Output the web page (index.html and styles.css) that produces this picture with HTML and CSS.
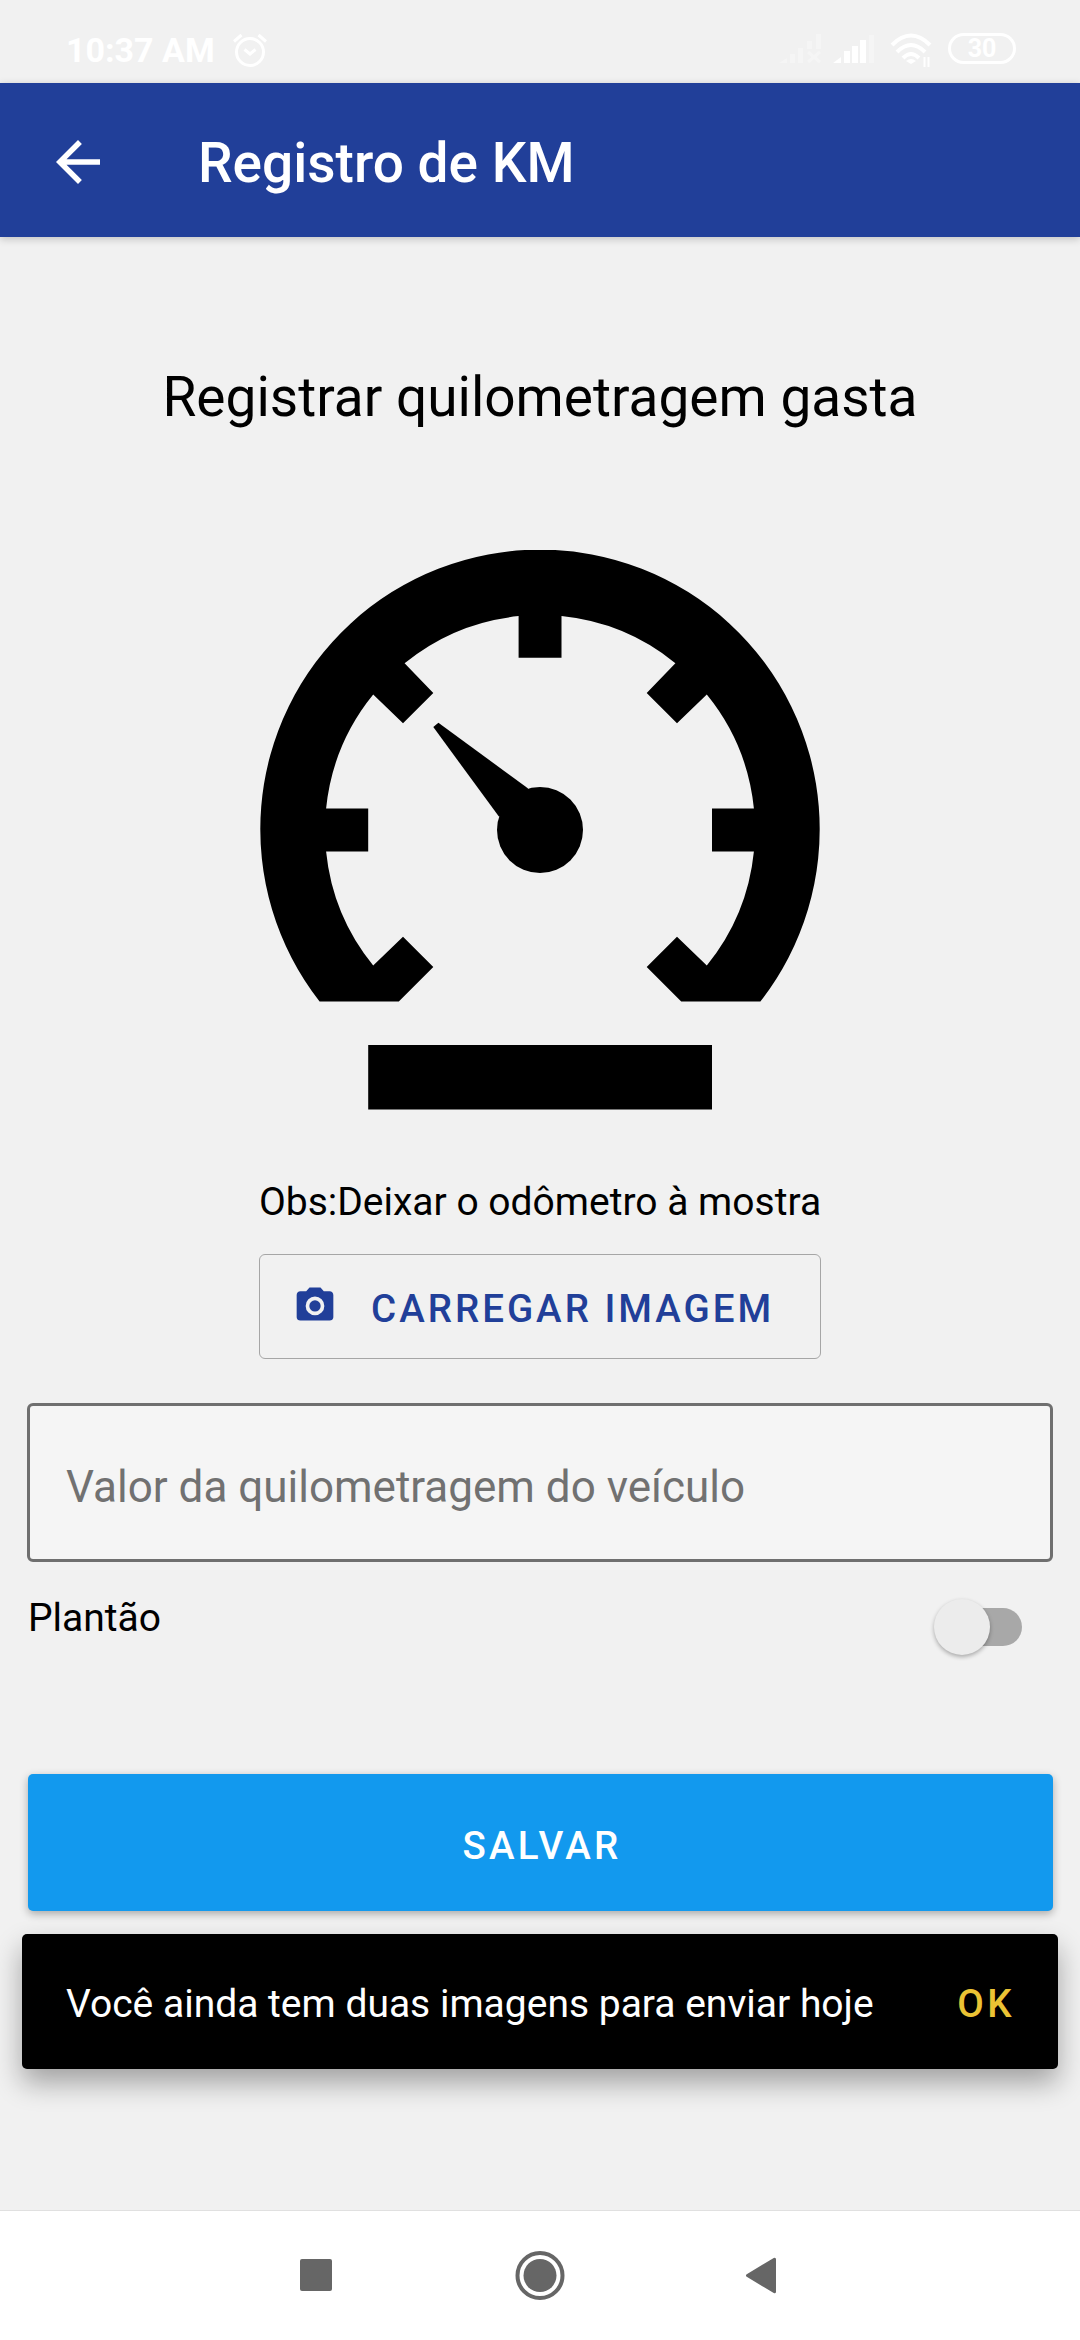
FILE: index.html
```html
<!DOCTYPE html>
<html lang="pt-BR">
<head>
  <meta charset="UTF-8">
  <meta name="viewport" content="width=device-width, initial-scale=1">
  <title>Registro de KM</title>
  <link rel="stylesheet" href="styles.css">
</head>
<body>

  <div class="status-bar">
    <span class="time">10:37 AM</span>
    <svg class="alarm" width="36" height="36" viewBox="0 0 36 36" fill="none" stroke="#fff" stroke-width="3">
      <circle cx="18" cy="20" r="13.5"/>
      <path d="M2 9.5 9.5 3M34 9.5 26.5 3M12.5 17.5 18 22l5.500-4.500"/>
    </svg>
    <div class="status-icons">
      <svg class="no-signal" width="44" height="32" viewBox="0 0 44 32" fill="#f5f5f5">
        <path d="M0 31 8 26v5zM11 22h5v9h-5zM19 16h5v15h-5zM28 9h5v8h-5zM37 2h5v15h-5z"/>
        <path d="M29 20 41 30M41 20 29 30" stroke="#f5f5f5" stroke-width="3"/>
      </svg>
      <svg class="signal" width="44" height="30" viewBox="0 0 44 30" fill="#fff">
        <path d="M0 29 8 23v6zM11 17h6v12h-6zM19 12h6v17h-6zM27 6h6v23h-6z"/>
        <path d="M36 1h5v28h-5z" fill="#f5f5f5"/>
      </svg>
      <svg class="wifi" width="44" height="36" viewBox="0 0 44 36" fill="none" stroke="#fff" stroke-width="4">
        <path d="M2 12Q21-7 40 12M7 19Q21 5 35 19M13 25Q21 17 29 25"/>
        <path d="M16 28Q21 24 26 28L21 31z" fill="#fff" stroke="none"/>
        <path d="M34.500 24v10M38.500 24v10" stroke-width="2"/>
      </svg>
      <span class="battery">30</span>
    </div>
  </div>

  <header class="app-bar">
    <svg class="back" width="44" height="44" viewBox="0 0 16 16" fill="#fff">
      <path d="M16 7H3.830l5.590-5.590L8 0 0 8l8 8 1.410-1.410L3.830 9H16z"/>
    </svg>
    <h1>Registro de KM</h1>
  </header>

  <main class="content">
    <h2>Registrar quilometragem gasta</h2>

    <svg class="gauge" width="560" height="560" viewBox="0 0 560 560">
      <path d="M59.600 451.500A279.700 279.700 0 1 1 500.400 451.500H421.200L386.700 417 417 386.700 446.800 415.500A215 215 0 0 0 493.900 301.500H452V258.600H493.900A215 215 0 0 0 446.800 144.600L417 173.300 386.700 143 415.400 113.200A215 215 0 0 0 301.500 66.100V107.800H258.600V66.100A215 215 0 0 0 144.600 113.200L173.300 143 143 173.300 113.200 144.600A215 215 0 0 0 66.100 258.600H108.200V301.500H66.100A215 215 0 0 0 113.200 415.500L143 386.700 173.300 417 138.800 451.500Z"/>
      <circle cx="280" cy="280" r="43"/>
      <path d="M173.300 177.100 178.400 172.700 267.800 238.300 280 280 238.700 266.300Z"/>
      <path d="M108.200 495H452V559.400H108.200Z"/>
    </svg>

    <p class="note">Obs:Deixar o odômetro à mostra</p>

    <button class="upload">
      <svg width="44" height="44" viewBox="0 0 24 24" fill="#213f99">
        <path d="M9 2.500 7.200 4.500H4C2.900 4.500 2 5.400 2 6.500v12.200c0 1.100.9 1.800 2 1.800h16c1.100 0 2-.7 2-1.800V6.500c0-1.100-.9-2-2-2h-3.200L15 2.500z"/>
        <circle cx="12" cy="12.500" r="4.100" fill="none" stroke="#f1f1f1" stroke-width="2"/>
      </svg>
      <span>CARREGAR IMAGEM</span>
    </button>

    <input class="km" type="text" placeholder="Valor da quilometragem do veículo">

    <div class="duty">
      <span>Plantão</span>
      <div class="switch"><div class="thumb"></div></div>
    </div>

    <button class="save">SALVAR</button>
  </main>

  <div class="snackbar">
    <span>Você ainda tem duas imagens para enviar hoje</span>
    <span class="ok">OK</span>
  </div>

  <nav class="nav-bar">
    <svg width="50" height="50" viewBox="0 0 50 50" fill="#666">
      <rect x="9" y="8" width="32" height="32" rx="2"/>
    </svg>
    <svg width="50" height="50" viewBox="0 0 50 50" fill="#666">
      <circle cx="25" cy="24.500" r="22.500" fill="none" stroke="#666" stroke-width="4"/>
      <circle cx="25" cy="24.500" r="16.500"/>
    </svg>
    <svg width="50" height="50" viewBox="0 0 50 50" fill="#666" stroke="#666" stroke-width="3" stroke-linejoin="round">
      <path d="M8.500 24.500 35.500 8.300V40.700z"/>
    </svg>
  </nav>

</body>
</html>
```
FILE: styles.css
```css
* {
  box-sizing: border-box;
}

body {
  margin: 0;
  height: 2340px;
  display: flex;
  flex-direction: column;
  overflow: hidden;
  background: #f1f1f1;
  color: #000;
  font-family: Roboto, sans-serif;
}

svg {
  display: block;
  flex: none;
}

h1, h2, p {
  margin: 0;
}

.status-bar {
  height: 83px;
  flex: none;
  display: flex;
  align-items: flex-start;
  padding: 0 64px 0 66px;
  color: #fff;
}

.time {
  margin-top: 30px;
  width: 150px;
  font-size: 34px;
  line-height: 40px;
  font-weight: 700;
  white-space: nowrap;
}

.alarm {
  margin: 32px 0 0 16px;
}

.status-icons {
  margin-left: auto;
  display: flex;
  align-items: flex-start;
}

.no-signal {
  margin-top: 32px;
}

.signal {
  margin: 34px 0 0 10px;
}

.wifi {
  margin: 33px 0 0 13px;
}

.battery {
  margin: 33px 0 0 14px;
  width: 68px;
  height: 31px;
  border: 3px solid #fff;
  border-radius: 16px;
  font-size: 25px;
  line-height: 26px;
  font-weight: 700;
  text-align: center;
}

.app-bar {
  height: 154px;
  flex: none;
  display: flex;
  align-items: center;
  padding: 4px 56px 0;
  background: #213f99;
  color: #fff;
  box-shadow: 0 2px 8px rgba(0, 0, 0, 0.2);
}

.app-bar h1 {
  margin: 1px 0 0 98px;
  font-size: 55px;
  line-height: 64px;
  font-weight: 500;
}

.content {
  flex: 1;
  display: flex;
  flex-direction: column;
  align-items: center;
  padding: 128px 27px 0;
}

h2 {
  font-size: 55px;
  line-height: 64px;
  font-weight: 400;
}

.gauge {
  margin-top: 121px;
}

.note {
  margin-top: 70px;
  font-size: 39px;
  line-height: 45px;
}

.upload {
  width: 562px;
  height: 105px;
  margin-top: 29px;
  display: flex;
  align-items: center;
  padding: 0 0 0 33px;
  border: 1px solid #a6a6a6;
  border-radius: 6px;
  background: none;
  color: #213f99;
  font: 500 38.5px Roboto, sans-serif;
  letter-spacing: 3px;
}

.upload svg {
  margin-bottom: 4px;
}

.upload span {
  margin: 4px 0 0 34px;
  white-space: nowrap;
}

.km {
  width: 1026px;
  height: 159px;
  margin-top: 44px;
  padding: 8px 36px 0;
  border: 3px solid #6f6f6f;
  border-radius: 6px;
  background: #f5f5f5;
  font: 44px Roboto, sans-serif;
}

.km::placeholder {
  color: #717171;
}

.duty {
  width: 1026px;
  margin-top: 34px;
  padding-left: 1px;
  display: flex;
  justify-content: space-between;
  align-items: flex-start;
  font-size: 39px;
  line-height: 45px;
}

.switch {
  width: 82px;
  height: 38px;
  margin: 12px 31px 0 0;
  display: flex;
  align-items: center;
  border-radius: 19px;
  background: #a8a8a8;
}

.thumb {
  width: 56px;
  height: 56px;
  margin-left: -6px;
  flex: none;
  border-radius: 50%;
  background: #ececec;
  box-shadow: 0 2px 4px rgba(0, 0, 0, 0.3);
}

.save {
  width: 1025px;
  height: 137px;
  margin: 128px 0 0 1px;
  padding: 6px 0 0 3px;
  border: none;
  border-radius: 5px;
  background: #1299ee;
  color: #fff;
  font: 500 38.5px Roboto, sans-serif;
  letter-spacing: 3.3px;
  box-shadow: 0 3px 8px rgba(0, 0, 0, 0.3);
}

.snackbar {
  height: 135px;
  flex: none;
  margin: 0 22px 141px;
  padding: 4px 43px 0 44px;
  display: flex;
  align-items: center;
  justify-content: space-between;
  border-radius: 5px;
  background: #000;
  color: #fff;
  font-size: 39px;
  box-shadow: 0 14px 28px rgba(0, 0, 0, 0.33);
}

.ok {
  color: #ebc334;
  font-size: 38.5px;
  font-weight: 500;
  letter-spacing: 3.44px;
}

.nav-bar {
  height: 130px;
  flex: none;
  display: flex;
  justify-content: center;
  align-items: center;
  gap: 174px;
  border-top: 1px solid #e0e0e0;
  background: #fff;
}
```
